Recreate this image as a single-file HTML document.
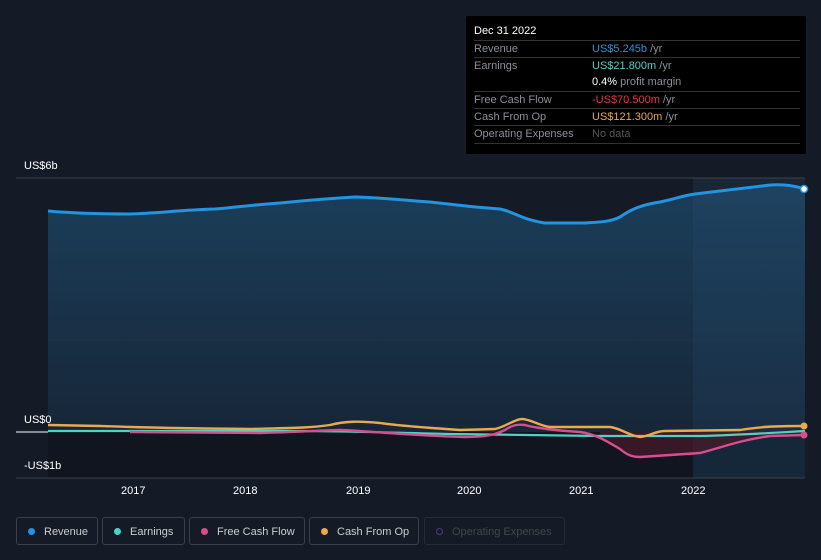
<!DOCTYPE html><html><head><style>
body{margin:0;width:821px;height:560px;background:#151b26;font-family:"Liberation Sans",sans-serif;overflow:hidden;position:relative}
.tt{position:absolute;left:466px;top:16px;width:340px;height:138px;background:#000;border-radius:2px;font-size:11px;color:#8a8f99}
.tt .h{color:#fff;font-size:11px;padding:9px 8px 0;height:14px}
.r{position:absolute;left:8px;right:6px;height:17px;border-top:1px solid #333;line-height:17px}
.r span{position:absolute;left:118px}
.lbl{position:absolute;color:#fff;font-size:11px}
.x{position:absolute;top:485px;color:#fff;font-size:11px}
.lg{position:absolute;top:517px;height:28px;border:1px solid #3a3f4a;border-radius:3px;color:#ccc;font-size:11px;line-height:28px;box-sizing:border-box;padding-left:27px}
.lg i{position:absolute;left:11px;top:10px;width:7px;height:7px;border-radius:50%}
</style></head><body>
<svg width="821" height="560" style="position:absolute;left:0;top:0">
<defs><linearGradient id="g" x1="0" y1="0" x2="0" y2="1"><stop offset="0" stop-color="#1b3e5a"/><stop offset="1" stop-color="#172638"/></linearGradient></defs>
<path d="M48,211 C70,213 90,214 130,214 C160,213 180,210 215,209 C230,208 240,206 280,203 C300,201 320,199 355,197 C370,197 390,199 430,202 C450,204 470,207 500,209 C515,212 520,219 545,223 L585,223 C600,222 610,222 620,217 C630,210 640,205 660,202 C675,199 685,195 695,194 C710,192 720,191 770,185 C785,184 795,186 805,189 L805,432 L48,432 Z" fill="url(#g)"/>
<rect x="693" y="178" width="112" height="300" fill="#2a5a80" opacity=".18"/>
<rect x="48" y="432" width="757" height="46" fill="#10151f"/>
<rect x="693" y="432" width="112" height="46" fill="#14283a"/>
<line x1="16" y1="178" x2="805" y2="178" stroke="#3a404b"/>
<line x1="48" y1="247" x2="805" y2="247" stroke="#2a3a4b" stroke-width=".4"/>
<line x1="48" y1="340" x2="805" y2="340" stroke="#2a3a4b" stroke-width=".4"/>
<line x1="16" y1="478" x2="805" y2="478" stroke="#3a404b"/>
<line x1="16" y1="432" x2="48" y2="432" stroke="#fff"/>
<path d="M600,437 C615,445 625,457 635,457 L700,453 C720,448 740,440 770,436 L805,435 L805,432 L600,432Z" fill="#4a1a2a" opacity=".7"/>
<path d="M48,431 L300,431 C350,431 400,433 450,434 L600,436 L700,436 C740,435 770,433 805,431" fill="none" stroke="#4fd1c5" stroke-width="2.2"/>
<path d="M130,432 L260,433 C300,432 330,430 340,430 C370,431 400,435 465,437 C485,437 495,435 505,430 C512,425 518,424 525,425 C535,428 560,431 580,432 C595,434 605,440 620,449 C628,456 634,457 640,457 L700,453 C720,448 740,440 770,436 L805,435" fill="none" stroke="#d64e8e" stroke-width="2.4"/>
<path d="M48,425 L100,426 C130,427 150,428 250,429 C290,428 310,428 330,425 C345,421 360,421 380,423 C400,426 430,428 460,430 L495,429 C505,427 515,419 522,419 C530,419 540,426 550,427 L610,427 C620,428 630,436 640,437 C650,436 655,431 665,431 L740,430 C760,427 770,426 805,426" fill="none" stroke="#e8a94f" stroke-width="2.4"/>
<path d="M48,211 C70,213 90,214 130,214 C160,213 180,210 215,209 C230,208 240,206 280,203 C300,201 320,199 355,197 C370,197 390,199 430,202 C450,204 470,207 500,209 C515,212 520,219 545,223 L585,223 C600,222 610,222 620,217 C630,210 640,205 660,202 C675,199 685,195 695,194 C710,192 720,191 770,185 C785,184 795,186 805,189" fill="none" stroke="#2394df" stroke-width="3"/>
<circle cx="804" cy="189" r="3.5" fill="#fff" stroke="#2394df" stroke-width="1.5"/>
<circle cx="804" cy="426" r="3.5" fill="#e8a94f"/>
<circle cx="804" cy="435" r="3.5" fill="#d64e8e"/>
</svg>
<div class="lbl" style="left:24px;top:160px">US$6b</div>
<div class="lbl" style="left:24px;top:414px">US$0</div>
<div class="lbl" style="left:24px;top:460px">-US$1b</div>
<div class="x" style="left:121px">2017</div><div class="x" style="left:233px">2018</div><div class="x" style="left:346px">2019</div><div class="x" style="left:457px">2020</div><div class="x" style="left:569px">2021</div><div class="x" style="left:681px">2022</div>
<div class="tt"><div class="h">Dec 31 2022</div>
<div class="r" style="top:24px">Revenue<span><b style="color:#2394df;font-weight:normal">US$5.245b</b> /yr</span></div>
<div class="r" style="top:41px">Earnings<span><b style="color:#4fd1c5;font-weight:normal">US$21.800m</b> /yr</span></div>
<div class="r" style="top:58px;border-top:none"><span><b style="color:#fff;font-weight:normal">0.4%</b> profit margin</span></div>
<div class="r" style="top:75px">Free Cash Flow<span><b style="color:#e5393f;font-weight:normal">-US$70.500m</b> /yr</span></div>
<div class="r" style="top:92px">Cash From Op<span><b style="color:#e8a94f;font-weight:normal">US$121.300m</b> /yr</span></div>
<div class="r" style="top:109px;border-bottom:1px solid #333">Operating Expenses<span style="color:#555">No data</span></div>
</div>
<div class="lg" style="left:16px;width:82px"><i style="background:#2394df"></i>Revenue</div>
<div class="lg" style="left:102px;width:83px"><i style="background:#4fd1c5"></i>Earnings</div>
<div class="lg" style="left:189px;width:116px"><i style="background:#d64e8e"></i>Free Cash Flow</div>
<div class="lg" style="left:309px;width:110px"><i style="background:#e8a94f"></i>Cash From Op</div>
<div class="lg" style="left:424px;width:141px;color:#444;border-color:#262b35"><i style="border:1px solid #4a3a7a;width:5px;height:5px"></i>Operating Expenses</div>
</body></html>
